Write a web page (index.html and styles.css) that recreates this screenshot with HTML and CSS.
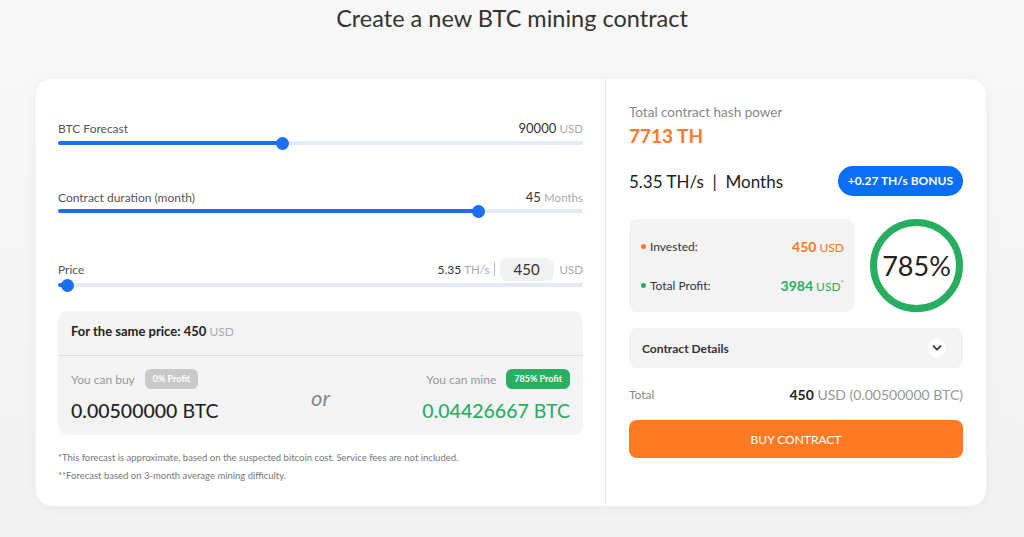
FILE: index.html
```html
<!DOCTYPE html>
<html lang="en">
<head>
    <meta charset="UTF-8">
    <meta name="viewport" content="width=device-width, initial-scale=1.0">
    <title>New BTC mining contract</title>
    <link rel="stylesheet" href="styles.css">
</head>
<body>
    <h1 class="page-title">Create a new BTC mining contract</h1>

    <div class="contract-card">
        <!-- Left: calculator -->
        <div class="calc">
            <div class="field">
                <div class="field-head">
                    <span class="field-label">BTC Forecast</span>
                    <span class="field-value">90000 <span class="unit">USD</span></span>
                </div>
                <div class="track track-first">
                    <div class="fill" style="width: 42.7%"></div>
                    <div class="thumb" style="left: 42.7%"></div>
                </div>
            </div>

            <div class="field">
                <div class="field-head">
                    <span class="field-label">Contract duration (month)</span>
                    <span class="field-value">45 <span class="unit">Months</span></span>
                </div>
                <div class="track">
                    <div class="fill" style="width: 80%"></div>
                    <div class="thumb" style="left: 80%"></div>
                </div>
            </div>

            <div class="field field-price">
                <div class="field-head price-head">
                    <span class="field-label">Price</span>
                    <span class="price-right">
                        <span class="field-value small">5.35 <span class="unit">TH/s</span></span>
                        <span class="sep"></span>
                        <input class="price-input" type="text" value="450">
                        <span class="unit">USD</span>
                    </span>
                </div>
                <div class="track track-price">
                    <div class="fill" style="width: 1.9%"></div>
                    <div class="thumb" style="left: 1.9%"></div>
                </div>
            </div>

            <div class="compare">
                <div class="compare-top">For the same price: 450 <span class="unit">USD</span></div>
                <div class="compare-body">
                    <div class="option">
                        <div class="option-head">You can buy <span class="badge badge-gray">0% Profit</span></div>
                        <div class="option-amount"><span class="num">0.00500000</span> BTC</div>
                    </div>
                    <div class="or">or</div>
                    <div class="option option-right">
                        <div class="option-head">You can mine <span class="badge badge-green">785% Profit</span></div>
                        <div class="option-amount green"><span class="num">0.04426667</span> BTC</div>
                    </div>
                </div>
            </div>

            <div class="notes">
                <p>*This forecast is approximate, based on the suspected bitcoin cost. Service fees are not included.</p>
                <p>**Forecast based on 3-month average mining difficulty.</p>
            </div>
        </div>

        <!-- Right: summary -->
        <div class="summary">
            <div class="hash-label">Total contract hash power</div>
            <div class="hash-value">7713 TH</div>

            <div class="rate-row">
                <span class="rate">5.35 TH/s &nbsp;|&nbsp; Months</span>
                <span class="bonus">+0.27 TH/s BONUS</span>
            </div>

            <div class="stats-row">
                <div class="stats">
                    <div class="stat">
                        <span class="stat-label"><span class="dot dot-orange"></span>Invested:</span>
                        <span class="stat-value orange"><b>450</b> USD</span>
                    </div>
                    <div class="stat">
                        <span class="stat-label"><span class="dot dot-green"></span>Total Profit:</span>
                        <span class="stat-value green"><b>3984</b> USD<sup>*</sup></span>
                    </div>
                </div>
                <div class="ring">785%</div>
            </div>

            <div class="details">
                <span>Contract Details</span>
                <span class="chevron">
                    <svg width="10" height="6" viewBox="0 0 10 6"><path d="M1.5 1.2 L5 4.6 L8.5 1.2" fill="none" stroke="#2f3a56" stroke-width="1.8" stroke-linecap="round" stroke-linejoin="round"/></svg>
                </span>
            </div>

            <div class="total-row">
                <span class="total-label">Total</span>
                <span class="total-value"><b>450</b> USD (0.00500000 BTC)</span>
            </div>

            <button class="buy-btn">BUY CONTRACT</button>
        </div>
    </div>
</body>
</html>
```

FILE: styles.css
```css
body {
    margin: 0;
    font-family: Lato, "Open Sans", Arial, sans-serif;
    background: linear-gradient(180deg, #f8f8f8, #f2f2f2);
    color: #222;
    height: 537px;
    overflow: hidden;
}

/* Page heading */
.page-title {
    margin: 0;
    text-align: center;
    font-size: 23.5px;
    font-weight: 400;
    line-height: 36px;
    color: #333;
}

/* Main card */
.contract-card {
    width: 950px;
    margin: 43px 0 0 36px;
    background: #fff;
    border-radius: 16px;
    box-shadow: 0 2px 14px rgba(0, 0, 0, 0.04);
    display: flex;
}

.calc {
    width: 525px;
    padding: 41px 22px 21px;
    border-right: 1px solid #ececec;
}

.summary {
    flex: 1;
    padding: 24px 23px 0;
    display: flex;
    flex-direction: column;
}

/* Sliders */
.field {
    margin-bottom: 44px;
}

.field-price {
    margin-top: 1px;
    margin-bottom: 24px;
}

.field-head {
    display: flex;
    justify-content: space-between;
    align-items: center;
    height: 16px;
}

.price-head {
    height: 24px;
}

.field-label {
    font-size: 12px;
    color: #555;
}

.field-value {
    font-size: 13px;
    color: #333;
}

.field-value.small {
    font-size: 12px;
}

.unit {
    color: #aaa;
    font-size: 11.5px;
}

.price-right {
    display: flex;
    align-items: center;
    gap: 4px;
}

.sep {
    width: 1px;
    height: 14px;
    background: #a9c4f5;
    margin-right: 1px;
}

.price-input {
    width: 54px;
    height: 23px;
    box-sizing: border-box;
    border: none;
    border-radius: 8px;
    background: #f2f2f2;
    font-family: inherit;
    font-size: 15px;
    color: #333;
    text-align: center;
    padding: 0;
    margin-right: 2px;
}

.track {
    position: relative;
    height: 4px;
    background: #e4ebf6;
    border-radius: 2px;
    margin-top: 4px;
}

.track-first {
    margin-top: 5px;
}

.track-price {
    margin-top: 2px;
}

.fill {
    height: 100%;
    background: #1a6ff4;
    border-radius: 2px;
}

.thumb {
    position: absolute;
    top: -4.5px;
    width: 13px;
    height: 13px;
    margin-left: -6.5px;
    border-radius: 50%;
    background: #1a6ff4;
}

/* Comparison box */
.compare {
    background: #f4f4f4;
    border-radius: 10px;
}

.compare-top {
    height: 44px;
    line-height: 40px;
    padding: 0 13px;
    font-size: 13px;
    font-weight: 700;
    color: #222;
    border-bottom: 1px solid #dcdcdc;
}

.compare-top .unit {
    font-weight: 400;
    font-size: 12px;
}

.compare-body {
    display: grid;
    grid-template-columns: 1fr auto 1fr;
    padding: 13px 13px 12px;
}

.option-head {
    display: flex;
    align-items: center;
    gap: 10px;
    height: 20px;
    font-size: 12px;
    color: #999;
}

.option-right .option-head {
    justify-content: flex-end;
}

.option-right {
    text-align: right;
}

.badge {
    height: 20px;
    line-height: 20px;
    padding: 0 8px;
    border-radius: 6px;
    font-size: 9px;
    font-weight: 700;
    color: #fff;
}

.badge-gray {
    background: #c9c9c9;
}

.badge-green {
    background: #27b061;
}

.option-amount {
    margin-top: 10px;
    font-size: 19.5px;
    line-height: 24px;
    color: #222;
}

.option-amount .num {
    font-weight: 500;
}

.or {
    align-self: center;
    padding-top: 2px;
    font-size: 22px;
    font-style: italic;
    color: #8a8a8a;
}

.green {
    color: #27ae60;
}

.orange {
    color: #ff7424;
}

.notes {
    margin-top: 14px;
}

.notes p {
    margin: 0;
    font-size: 9.5px;
    line-height: 18px;
    color: #777;
}

/* Summary column */
.hash-label {
    font-size: 13.5px;
    line-height: 18px;
    color: #888;
}

.hash-value {
    margin-top: 3px;
    font-size: 19px;
    line-height: 24px;
    font-weight: 700;
    color: #ff7a2a;
}

.rate-row {
    margin-top: 18px;
    display: flex;
    justify-content: space-between;
    align-items: center;
}

.rate {
    font-size: 17px;
    color: #222;
}

.bonus {
    height: 30px;
    line-height: 30px;
    padding: 0 10px;
    border-radius: 15px;
    background: #0b6ef6;
    color: #fff;
    font-size: 12px;
    font-weight: 700;
}

.stats-row {
    margin-top: 23px;
    display: flex;
    align-items: center;
    gap: 16px;
}

.stats {
    flex: 1;
    background: #f4f4f4;
    border-radius: 8px;
    padding: 18px 10px 18px 12px;
    display: flex;
    flex-direction: column;
    gap: 21px;
}

.stat {
    display: flex;
    justify-content: space-between;
    align-items: center;
    height: 18px;
}

.stat-label {
    font-size: 12px;
    color: #333;
    display: flex;
    align-items: center;
}

.dot {
    width: 5px;
    height: 5px;
    border-radius: 50%;
    margin-right: 4px;
}

.dot-orange {
    background: #ff7424;
}

.dot-green {
    background: #27ae60;
}

.stat-value {
    font-size: 12px;
}

.stat-value b {
    font-size: 14px;
}

.stat-value sup {
    font-size: 8px;
    color: #999;
}

.ring {
    width: 93px;
    height: 93px;
    box-sizing: border-box;
    border: 7px solid #27ae60;
    border-radius: 50%;
    display: flex;
    align-items: center;
    justify-content: center;
    font-size: 27px;
    color: #222;
}

.details {
    margin-top: 16px;
    height: 40px;
    background: #f4f4f4;
    border-radius: 8px;
    display: flex;
    align-items: center;
    justify-content: space-between;
    padding: 0 17px 0 13px;
    font-size: 12px;
    font-weight: 700;
    color: #333;
}

.chevron {
    width: 18px;
    height: 18px;
    border-radius: 50%;
    background: #fff;
    display: flex;
    align-items: center;
    justify-content: center;
}

.total-row {
    margin-top: 16px;
    height: 20px;
    display: flex;
    justify-content: space-between;
    align-items: center;
}

.total-label {
    font-size: 12px;
    color: #888;
}

.total-value {
    font-size: 14px;
    color: #999;
}

.total-value b {
    color: #222;
}

.buy-btn {
    margin-top: 16px;
    height: 38px;
    border: none;
    border-radius: 8px;
    background: #ff7a22;
    color: #fff;
    font-family: inherit;
    font-size: 12px;
    cursor: pointer;
}
```
